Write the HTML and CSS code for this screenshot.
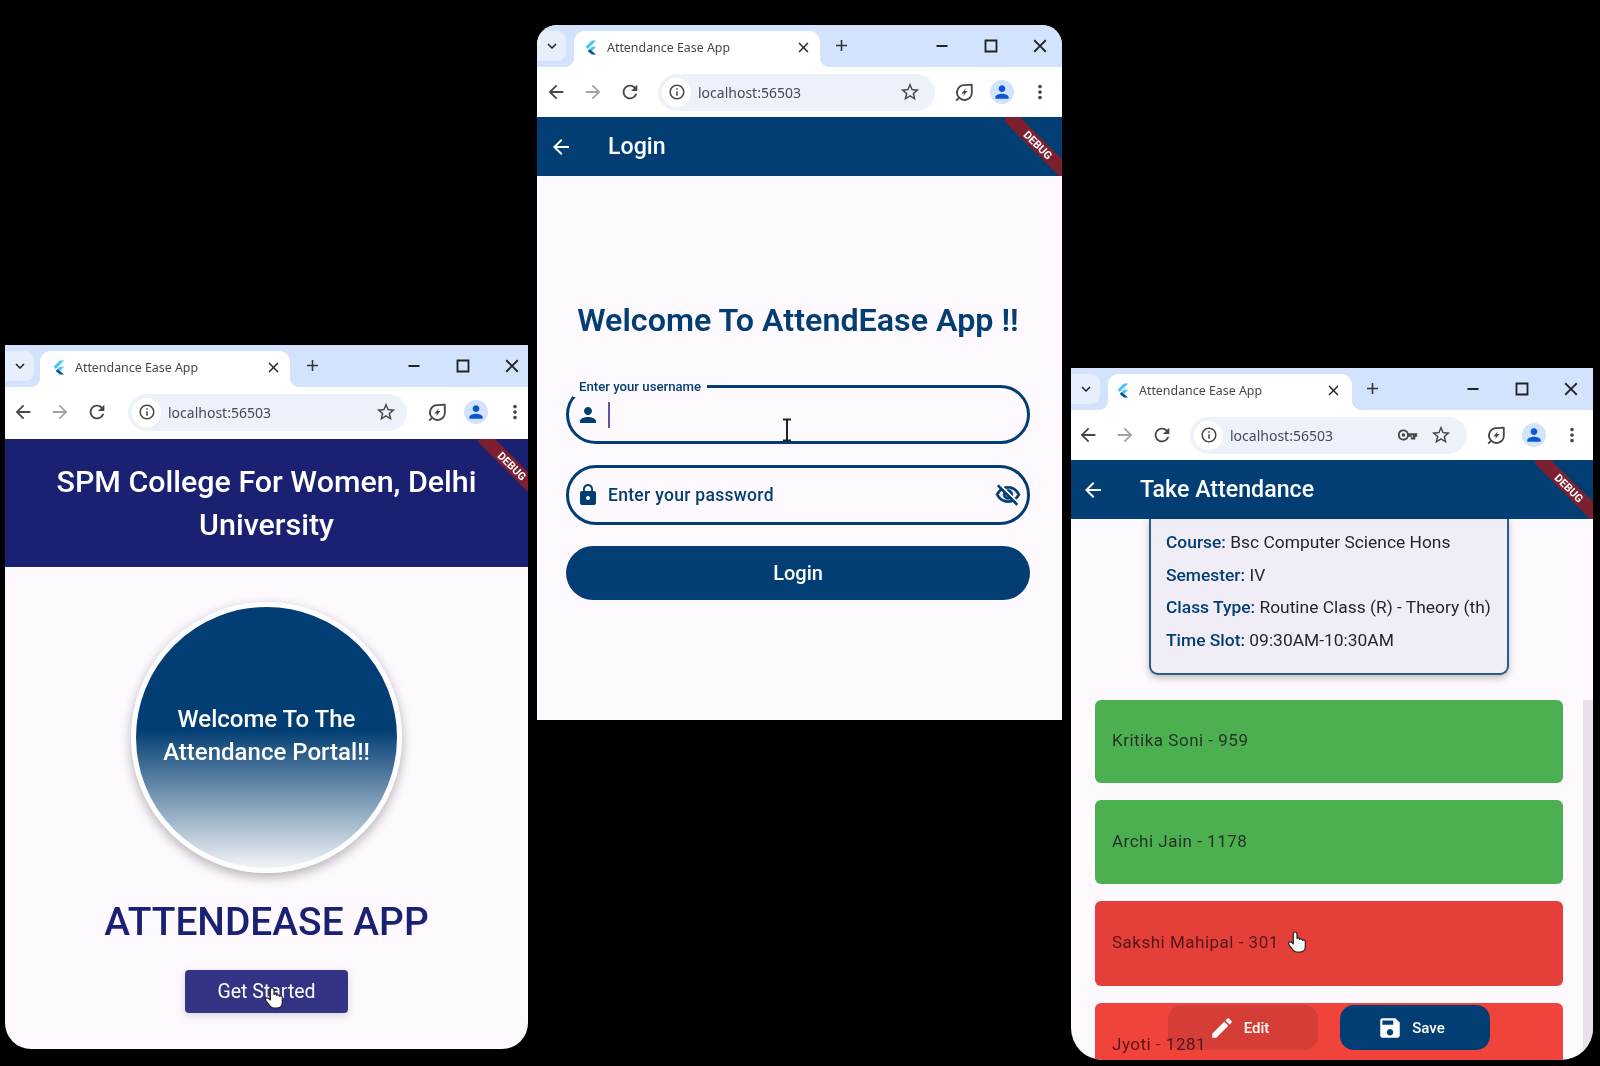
FILE: index.html
```html
<!DOCTYPE html>
<html lang="en">
<head>
<meta charset="utf-8">
<title>Attendance Ease App</title>
<link rel="stylesheet" href="styles.css">
</head>
<body>
<svg class="defs" aria-hidden="true">
  <symbol id="i-back" viewBox="0 0 24 24"><path d="M20 11H7.83l5.59-5.59L12 4 4 12l8 8 1.41-1.41L7.83 13H20v-2z"/></symbol>
  <symbol id="i-fwd" viewBox="0 0 24 24"><path d="M4 11h12.17l-5.59-5.59L12 4l8 8-8 8-1.41-1.41L16.17 13H4v-2z"/></symbol>
  <symbol id="i-reload" viewBox="0 0 24 24"><path d="M17.65 6.35C16.2 4.9 14.21 4 12 4c-4.42 0-7.99 3.58-7.99 8s3.57 8 7.99 8c3.73 0 6.84-2.55 7.73-6h-2.08c-.82 2.33-3.04 4-5.65 4-3.31 0-6-2.69-6-6s2.69-6 6-6c1.66 0 3.14.69 4.22 1.78L13 11h7V4l-2.35 2.35z"/></symbol>
  <symbol id="i-info" viewBox="0 0 24 24"><path d="M11 7h2v2h-2zm0 4h2v6h-2zm1-9C6.48 2 2 6.48 2 12s4.48 10 10 10 10-4.48 10-10S17.52 2 12 2zm0 18c-4.41 0-8-3.59-8-8s3.59-8 8-8 8 3.59 8 8-3.59 8-8 8z"/></symbol>
  <symbol id="i-star" viewBox="0 0 24 24"><path d="M22 9.24l-7.19-.62L12 2 9.19 8.63 2 9.24l5.46 4.73L5.820 21 12 17.27 18.18 21l-1.63-7.03L22 9.24zM12 15.4l-3.76 2.27 1-4.28-3.32-2.88 4.38-.38L12 6.1l1.71 4.04 4.38.38-3.32 2.88 1 4.28L12 15.4z"/></symbol>
  <symbol id="i-leaf" viewBox="0 0 24 24"><path d="M20.500 4v8.500a8 8 0 0 1-13.700 5.700A8 8 0 0 1 12.500 4.500z" fill="none" stroke="currentColor" stroke-width="2" stroke-linejoin="round"/><path d="M14.200 7.500l-5 6h3l-1.400 3.500 5-6h-3z"/><path d="M3.500 21.500l3.300-3.300" fill="none" stroke="currentColor" stroke-width="2"/></symbol>
  <symbol id="i-user" viewBox="0 0 24 24"><path d="M12 12c2.21 0 4-1.79 4-4s-1.79-4-4-4-4 1.79-4 4 1.79 4 4 4zm0 2c-2.67 0-8 1.34-8 4v2h16v-2c0-2.66-5.33-4-8-4z"/></symbol>
  <symbol id="i-dots" viewBox="0 0 24 24"><path d="M12 8c1.1 0 2-.9 2-2s-.9-2-2-2-2 .9-2 2 .9 2 2 2zm0 2c-1.1 0-2 .9-2 2s.9 2 2 2 2-.9 2-2-.9-2-2-2zm0 6c-1.1 0-2 .9-2 2s.9 2 2 2 2-.9 2-2-.9-2-2-2z"/></symbol>
  <symbol id="i-close" viewBox="0 0 24 24"><path d="M19 6.410L17.590 5 12 10.590 6.410 5 5 6.410 10.590 12 5 17.590 6.410 19 12 13.410 17.590 19 19 17.590 13.410 12z"/></symbol>
  <symbol id="i-add" viewBox="0 0 24 24"><path d="M19 13h-6v6h-2v-6H5v-2h6V5h2v6h6v2z"/></symbol>
  <symbol id="i-min" viewBox="0 0 24 24"><path d="M6 11h12v2H6z"/></symbol>
  <symbol id="i-max" viewBox="0 0 24 24"><path d="M5 5h14v14H5zm2 2v10h10V7z" fill-rule="evenodd"/></symbol>
  <symbol id="i-chev" viewBox="0 0 24 24"><path d="M16.590 8.590 12 13.170 7.410 8.590 6 10l6 6 6-6z"/></symbol>
  <symbol id="i-flutter" viewBox="0 0 24 24"><path fill="#47c5fb" d="M14 2h6L8 14l-3-3z"/><path fill="#47c5fb" d="M14 11h6l-6 6-3-3z"/><path fill="#00569e" d="M11 14l3 3 6 5h-6l-6-5z"/></symbol>
  <symbol id="i-key" viewBox="0 0 24 24"><path d="M7 6a6 6 0 1 0 5.650 8H15v3h5v-3h2v-4H12.650A6 6 0 0 0 7 6zm0 2a4 4 0 0 1 4 3.900V12h9v0h0v0h-3v3h-1v-3h-5v.1A4 4 0 1 1 7 8zm0 2a2 2 0 1 0 0 4 2 2 0 0 0 0-4z"/></symbol>
  <symbol id="i-lock" viewBox="0 0 24 24"><path d="M18 8h-1V6c0-2.760-2.240-5-5-5S7 3.240 7 6v2H6c-1.100 0-2 .9-2 2v10c0 1.100.9 2 2 2h12c1.100 0 2-.9 2-2V10c0-1.100-.9-2-2-2zm-6 9c-1.100 0-2-.9-2-2s.9-2 2-2 2 .9 2 2-.9 2-2 2zm3.100-9H8.900V6c0-1.710 1.390-3.100 3.100-3.100 1.710 0 3.100 1.390 3.100 3.100v2z"/></symbol>
  <symbol id="i-eye" viewBox="0 0 24 24"><path d="M12 6c3.790 0 7.170 2.130 8.820 5.500-.59 1.220-1.420 2.270-2.410 3.120l1.410 1.410c1.390-1.230 2.490-2.770 3.180-4.530C21.270 7.110 17 4 12 4c-1.270 0-2.490.2-3.640.57l1.650 1.650C10.660 6.090 11.320 6 12 6zm-1.070 1.140L13 9.210c.57.25 1.030.71 1.280 1.280l2.070 2.070c.08-.34.14-.7.14-1.070C16.500 9.010 14.480 7 12 7c-.37 0-.72.05-1.070.14zM2.010 3.870l2.680 2.680C3.060 7.830 1.770 9.530 1 11.500 2.730 15.890 7 19 12 19c1.520 0 2.980-.29 4.320-.82l3.420 3.420 1.410-1.410L3.420 2.450 2.010 3.870zm7.500 7.500l2.610 2.610c-.04.01-.08.02-.12.02-1.380 0-2.500-1.120-2.500-2.500 0-.05.01-.08.01-.13zm-3.400-3.400l1.750 1.750c-.23.55-.36 1.150-.36 1.780 0 2.480 2.020 4.500 4.500 4.500.63 0 1.230-.13 1.770-.36l.98.98c-.88.24-1.800.38-2.750.38-3.790 0-7.170-2.130-8.820-5.500.7-1.430 1.720-2.610 2.930-3.530z"/></symbol>
  <symbol id="i-edit" viewBox="0 0 24 24"><path d="M3 17.250V21h3.750L17.810 9.940l-3.750-3.750L3 17.250zM20.710 7.040c.39-.39.39-1.020 0-1.410l-2.340-2.340c-.39-.39-1.020-.39-1.410 0l-1.830 1.830 3.750 3.750 1.830-1.830z"/></symbol>
  <symbol id="i-save" viewBox="0 0 24 24"><path d="M17 3H5c-1.110 0-2 .9-2 2v14c0 1.100.89 2 2 2h14c1.100 0 2-.9 2-2V7l-4-4zm-5 16c-1.660 0-3-1.340-3-3s1.340-3 3-3 3 1.340 3 3-1.340 3-3 3zm3-10H5V5h10v4z"/></symbol>
  <symbol id="i-hand" viewBox="0 0 24 24"><path fill="#fff" stroke="#222" stroke-width="1.2" stroke-linejoin="round" d="M9 2c-1 0-1.700.8-1.700 1.800V14l-1.800-1.700c-.8-.7-2-.7-2.600.1-.5.7-.5 1.600 0 2.300l4.200 5.500c1 1.200 2.400 1.800 3.900 1.800h3.200c2.900 0 5.100-2.300 5.100-5.200v-5.400c0-.9-.7-1.600-1.600-1.600-.5 0-.9.2-1.200.5 0-.9-.7-1.500-1.600-1.500-.5 0-.9.2-1.200.5-.1-.8-.8-1.400-1.600-1.400-.4 0-.8.1-1.100.4V3.800C10.700 2.800 10 2 9 2z"/></symbol>
</svg>

<main class="desktop">

  <section class="win win-start">
    <div class="tabbar">
      <div class="tabchev"><svg class="ic ic-s"><use href="#i-chev"/></svg></div>
      <div class="tab">
        <svg class="flut"><use href="#i-flutter"/></svg>
        <span class="tab-title">Attendance Ease App</span>
        <svg class="ic ic-x"><use href="#i-close"/></svg>
      </div>
      <svg class="ic ic-plus"><use href="#i-add"/></svg>
      <div class="winctl">
        <svg class="ic"><use href="#i-min"/></svg>
        <svg class="ic"><use href="#i-max"/></svg>
        <svg class="ic"><use href="#i-close"/></svg>
      </div>
    </div>
    <div class="toolbar">
      <span class="tb"><svg class="ic"><use href="#i-back"/></svg></span>
      <span class="tb dim"><svg class="ic"><use href="#i-fwd"/></svg></span>
      <span class="tb"><svg class="ic"><use href="#i-reload"/></svg></span>
      <div class="omni">
        <span class="omni-info"><svg class="ic ic-info"><use href="#i-info"/></svg></span>
        <span class="url">localhost:56503</span>
        <svg class="ic"><use href="#i-star"/></svg>
      </div>
      <span class="tb"><svg class="ic"><use href="#i-leaf"/></svg></span>
      <span class="tb"><span class="avatar"><svg class="ic ic-av"><use href="#i-user"/></svg></span></span>
      <span class="tb"><svg class="ic"><use href="#i-dots"/></svg></span>
    </div>
    <div class="app">
      <header class="bar bar-navy">
        <h1 class="college">SPM College For Women, Delhi University</h1>
        <div class="ribbon"><span>DEBUG</span></div>
      </header>
      <div class="start-body">
        <div class="orb"><p>Welcome To The Attendance Portal!!</p></div>
        <h2 class="brand">ATTENDEASE APP</h2>
        <button class="cta">Get Started</button>
      </div>
    </div>
  </section>

  <section class="win win-login">
    <div class="tabbar">
      <div class="tabchev"><svg class="ic ic-s"><use href="#i-chev"/></svg></div>
      <div class="tab">
        <svg class="flut"><use href="#i-flutter"/></svg>
        <span class="tab-title">Attendance Ease App</span>
        <svg class="ic ic-x"><use href="#i-close"/></svg>
      </div>
      <svg class="ic ic-plus"><use href="#i-add"/></svg>
      <div class="winctl">
        <svg class="ic"><use href="#i-min"/></svg>
        <svg class="ic"><use href="#i-max"/></svg>
        <svg class="ic"><use href="#i-close"/></svg>
      </div>
    </div>
    <div class="toolbar">
      <span class="tb"><svg class="ic"><use href="#i-back"/></svg></span>
      <span class="tb dim"><svg class="ic"><use href="#i-fwd"/></svg></span>
      <span class="tb"><svg class="ic"><use href="#i-reload"/></svg></span>
      <div class="omni">
        <span class="omni-info"><svg class="ic ic-info"><use href="#i-info"/></svg></span>
        <span class="url">localhost:56503</span>
        <svg class="ic"><use href="#i-star"/></svg>
      </div>
      <span class="tb"><svg class="ic"><use href="#i-leaf"/></svg></span>
      <span class="tb"><span class="avatar"><svg class="ic ic-av"><use href="#i-user"/></svg></span></span>
      <span class="tb"><svg class="ic"><use href="#i-dots"/></svg></span>
    </div>
    <div class="app">
      <header class="bar bar-blue bar-title">
        <svg class="ic-app"><use href="#i-back"/></svg>
        <h1 class="title">Login</h1>
        <div class="ribbon"><span>DEBUG</span></div>
      </header>
      <div class="login-body">
        <h2 class="welcome">Welcome To AttendEase App !!</h2>
        <div class="field field-focus">
          <span class="float-label">Enter your username</span>
          <svg class="f-ic"><use href="#i-user"/></svg>
          <span class="caret"></span>
        </div>
        <div class="field field-pass">
          <svg class="f-ic"><use href="#i-lock"/></svg>
          <span class="hint">Enter your password</span>
          <svg class="f-eye"><use href="#i-eye"/></svg>
        </div>
        <button class="login-btn">Login</button>
      </div>
    </div>
  </section>

  <section class="win win-take">
    <div class="tabbar">
      <div class="tabchev"><svg class="ic ic-s"><use href="#i-chev"/></svg></div>
      <div class="tab">
        <svg class="flut"><use href="#i-flutter"/></svg>
        <span class="tab-title">Attendance Ease App</span>
        <svg class="ic ic-x"><use href="#i-close"/></svg>
      </div>
      <svg class="ic ic-plus"><use href="#i-add"/></svg>
      <div class="winctl">
        <svg class="ic"><use href="#i-min"/></svg>
        <svg class="ic"><use href="#i-max"/></svg>
        <svg class="ic"><use href="#i-close"/></svg>
      </div>
    </div>
    <div class="toolbar">
      <span class="tb"><svg class="ic"><use href="#i-back"/></svg></span>
      <span class="tb dim"><svg class="ic"><use href="#i-fwd"/></svg></span>
      <span class="tb"><svg class="ic"><use href="#i-reload"/></svg></span>
      <div class="omni">
        <span class="omni-info"><svg class="ic ic-info"><use href="#i-info"/></svg></span>
        <span class="url">localhost:56503</span>
        <svg class="ic ic-key"><use href="#i-key"/></svg>
        <svg class="ic"><use href="#i-star"/></svg>
      </div>
      <span class="tb"><svg class="ic"><use href="#i-leaf"/></svg></span>
      <span class="tb"><span class="avatar"><svg class="ic ic-av"><use href="#i-user"/></svg></span></span>
      <span class="tb"><svg class="ic"><use href="#i-dots"/></svg></span>
    </div>
    <div class="app">
      <header class="bar bar-blue bar-title">
        <svg class="ic-app"><use href="#i-back"/></svg>
        <h1 class="title">Take Attendance</h1>
        <div class="ribbon"><span>DEBUG</span></div>
      </header>
      <div class="take-body">
        <div class="info">
          <p><b>Course:</b> Bsc Computer Science Hons</p>
          <p><b>Semester:</b> IV</p>
          <p><b>Class Type:</b> Routine Class (R) - Theory (th)</p>
          <p><b>Time Slot:</b> 09:30AM-10:30AM</p>
        </div>
        <ul class="students">
          <li class="st st-green st-1">Kritika Soni - 959</li>
          <li class="st st-green st-2">Archi Jain - 1178</li>
          <li class="st st-red st-3">Sakshi Mahipal - 301</li>
          <li class="st st-red2 st-4">Jyoti - 1281</li>
        </ul>
        <span class="scrollbar"></span>
        <div class="fabs">
          <button class="fab fab-edit"><svg class="fab-ic"><use href="#i-edit"/></svg>Edit</button>
          <button class="fab fab-save"><svg class="fab-ic"><use href="#i-save"/></svg>Save</button>
        </div>
      </div>
    </div>
  </section>

  <svg class="cursor cur-start"><use href="#i-hand"/></svg>
  <svg class="cursor cur-take"><use href="#i-hand"/></svg>
  <svg class="ibeam" viewBox="0 0 12 24"><path d="M2 1.500h8M2 22.500h8M6 1.500v21" fill="none" stroke="#222" stroke-width="2"/></svg>
</main>
</body>
</html>
```

FILE: styles.css
```css
* { box-sizing: border-box; }
html, body { margin: 0; padding: 0; background: #000; }
body { width: 1600px; height: 1066px; overflow: hidden; font-family: Roboto, "Liberation Sans", sans-serif; }
.defs { position: absolute; width: 0; height: 0; }
.desktop { position: relative; width: 1600px; height: 1066px; background: #000; filter: blur(.35px); }

.win { position: absolute; display: flex; flex-direction: column; overflow: hidden; background: #fef9fe; }
.win-start { left: 5px; top: 345px; width: 523px; height: 704px; border-radius: 0 0 26px 26px; }
.win-login { left: 537px; top: 25px; width: 525px; height: 695px; border-radius: 20px 20px 0 0; }
.win-take { left: 1071px; top: 368px; width: 522px; height: 692px; border-radius: 0 0 32px 32px; }

.ic { width: 22px; height: 22px; fill: #474747; color: #474747; display: block; flex: none; }
.tabbar { height: 42px; background: #d3e3fd; display: flex; align-items: flex-end; flex: none; position: relative; }
.tabchev { width: 29px; height: 30px; margin: 0 8px 6px 0; background: #e8effc; border-radius: 0 9px 9px 0; display: flex; align-items: center; justify-content: center; flex: none; }
.ic-s { width: 18px; height: 18px; fill: #1f1f1f; }
.tab { width: 246px; height: 36px; background: #fff; border-radius: 11px 11px 0 0; display: flex; align-items: center; padding: 0 8px 4px 8px; position: relative; flex: none; }
.tab::before, .tab::after { content: ""; position: absolute; bottom: 0; width: 10px; height: 10px; }
.tab::before { left: -10px; background: radial-gradient(circle at 0 0, transparent 10px, #fff 10.5px); }
.tab::after { right: -10px; background: radial-gradient(circle at 100% 0, transparent 10px, #fff 10.5px); }
.flut { width: 17px; height: 17px; flex: none; }
.tab-title { margin-left: 8px; flex: 1; font: 12.4px "Noto Sans", "Open Sans", sans-serif; color: #474747; white-space: nowrap; }
.ic-x { width: 17px; height: 17px; fill: #222; }
.ic-plus { width: 19px; height: 19px; fill: #333; margin: 0 0 12px 12px; }
.winctl { margin-left: auto; display: flex; gap: 27px; align-items: center; height: 42px; padding-right: 11px; }
.winctl .ic { fill: #222; }
.win-start .winctl { padding-right: 5px; }
.win-start .tabchev { margin-right: 6px; }
.win-start .tab { width: 250px; padding-left: 10px; }
.win-start .ic-plus { margin-left: 13px; }
.win-take .tab { width: 244px; padding: 0 10px 4px 6px; }
.win-take .ic-plus { margin-left: 11px; }

.toolbar { height: 50px; background: #fff; display: flex; align-items: center; flex: none; }
.win-start .toolbar { height: 52px; padding-bottom: 2px; }
.tb { width: 38px; height: 38px; display: flex; align-items: center; justify-content: center; flex: none; }
.toolbar > .tb:nth-child(-n+3) { width: 37px; }
.tb.dim .ic { fill: #a3a3a3; }
.omni { width: 277px; height: 37px; margin: 0 10px 0 10px; background: #edf2fa; border-radius: 19px; display: flex; align-items: center; padding: 0 14px 0 4px; gap: 4px; flex: none; }
.win-start .toolbar > .tb:first-child { margin-left: -1px; }
.win-start .omni { width: 279px; margin: 0 10px 0 13px; padding-right: 10px; }
.win-start .toolbar > .tb:nth-last-child(-n+3) { width: 39px; }
.win-take .toolbar > .tb:first-child { margin-left: -2px; }
.win-take .omni { padding-right: 15px; }
.omni-info { width: 29px; height: 29px; border-radius: 50%; background: #fff; display: flex; align-items: center; justify-content: center; flex: none; }
.ic-info { width: 18px; height: 18px; }
.url { flex: 1; font: 14px "Noto Sans", "Open Sans", sans-serif; color: #474a55; margin-left: 3px; }
.ic-key { margin-right: 7px; }
.avatar { width: 24px; height: 24px; border-radius: 50%; background: #d3e3fd; display: flex; align-items: center; justify-content: center; }
.ic-av { width: 20px; height: 20px; fill: #0b57d0; }

.app { flex: 1; display: flex; flex-direction: column; min-height: 0; position: relative; }
.bar { position: relative; overflow: hidden; color: #fff; flex: none; }
.bar-navy { background: #1a2072; height: 128px; display: flex; align-items: center; justify-content: center; }
.bar-blue { background: #023e73; height: 59px; }
.bar-title { display: flex; align-items: center; }
.ic-app { width: 24px; height: 24px; fill: #fff; margin-left: 12px; flex: none; }
.win-take .ic-app { margin-left: 10px; }
.title { margin: 0 0 1px 35px; font-size: 23.200px; font-weight: 500; }
.college { margin: 0; width: 460px; text-align: center; font-size: 30.400px; font-weight: 500; line-height: 43px; }
.ribbon { position: absolute; right: -18px; top: 21px; width: 84px; height: 14px; background: #7c2030; transform: rotate(45deg); display: flex; align-items: center; justify-content: center; }
.ribbon span { font-size: 11px; font-weight: 700; color: #fff; }
.win-start .ribbon { right: -26px; top: 20px; }

.start-body { flex: 1; display: flex; flex-direction: column; align-items: center; padding-top: 35px; }
.orb { width: 271px; height: 271px; border-radius: 50%; border: 5px solid #fdfcff; background: linear-gradient(#023e73 0 47%, #f1f4f7 100%); box-shadow: 0 4px 12px rgba(0,0,0,.3); display: flex; align-items: center; justify-content: center; flex: none; }
.orb p { margin: 0 0 4px; width: 220px; color: #fff; text-align: center; font-size: 24px; font-weight: 500; line-height: 33px; }
.brand { margin: 26px 0 0; color: #1a2072; font-size: 38.900px; font-weight: 500; line-height: 46px; }
.cta { margin-top: 25px; width: 163px; height: 43px; border: 0; border-radius: 4px; background: #343487; color: #fff; font: 400 19.500px Roboto, sans-serif; box-shadow: 0 3px 8px rgba(0,0,0,.15); }

.login-body { flex: 1; padding: 122px 32px 0 29px; display: flex; flex-direction: column; }
.welcome { margin: 0 0 43px; color: #023e73; font-size: 32.250px; font-weight: 600; line-height: 44px; text-align: center; }
.field { position: relative; height: 59px; border: 3px solid #023e73; border-radius: 30px; display: flex; align-items: center; padding-left: 7px; flex: none; }
.field-pass { margin-top: 21px; height: 60px; }
.float-label { position: absolute; left: 4px; top: -11px; padding: 0 6px; background: #fef9fe; color: #023e73; font-size: 13.200px; font-weight: 500; line-height: 20px; }
.f-ic { width: 24px; height: 24px; fill: #023e73; flex: none; }
.caret { width: 2px; height: 26px; background: #6750a4; margin-left: 8px; }
.hint { margin-left: 8px; font-size: 17.500px; font-weight: 500; color: #023e73; letter-spacing: .3px; flex: 1; }
.f-eye { width: 26px; height: 26px; fill: #023e73; stroke: #023e73; stroke-width: .6; margin-right: 6px; flex: none; }
.login-btn { margin-top: 21px; height: 54px; border: 0; border-radius: 27px; background: #023e73; color: #fff; font: 500 20px Roboto, sans-serif; flex: none; }

.take-body { flex: 1; min-height: 0; position: relative; overflow: hidden; }
.info { margin-left: 78px; width: 360px; height: 156px; padding-top: 7px; padding-left: 15px; background: #f1edf6; border: 2px solid #2c5c8a; border-top: 0; border-radius: 0 0 9px 9px; box-shadow: 0 3px 7px rgba(0,0,0,.25); }
.info p { margin: 0; font-size: 17.400px; line-height: 32.700px; color: #26252c; white-space: nowrap; }
.info b { font-weight: 500; color: #023e73; }
.students { list-style: none; margin: 25px 0 0 24px; padding: 0; width: 468px; display: flex; flex-direction: column; gap: 17px; }
.st { border-radius: 6px; display: flex; align-items: center; padding: 0 0 4px 17px; font-size: 17px; letter-spacing: .5px; color: rgba(29,27,32,.85); flex: none; }
.st-green { background: #4caf50; }
.st-1 { height: 83px; }
.st-2 { height: 84px; padding-bottom: 3px; }
.st-3 { height: 85px; }
.st-red { background: #e53f3a; color: rgba(60,15,20,.85); }
.st-red2 { background: #f0433b; height: 90px; align-items: flex-start; padding-top: 31px; color: rgba(60,15,20,.85); }
.scrollbar { position: absolute; right: 0; top: 181px; width: 10px; bottom: 0; background: #e6e2e8; }
.fabs { position: absolute; left: 97px; bottom: 10px; display: flex; gap: 22px; }
.fab { width: 150px; height: 45px; border: 0; border-radius: 14px; color: #fff; font: 500 15px Roboto, sans-serif; display: flex; align-items: center; justify-content: center; gap: 9px; padding: 0 8px 0 0; }
.fab-edit { background: rgba(29,27,32,.13); }
.fab-save { background: #023e73; }
.fab-ic { width: 26px; height: 26px; fill: #fff; flex: none; }

.cursor { position: absolute; width: 24px; height: 24px; }
.cur-start { left: 263px; top: 986px; }
.cur-take { left: 1286px; top: 930px; }
.ibeam { position: absolute; left: 781px; top: 418px; width: 12px; height: 24px; }
```
